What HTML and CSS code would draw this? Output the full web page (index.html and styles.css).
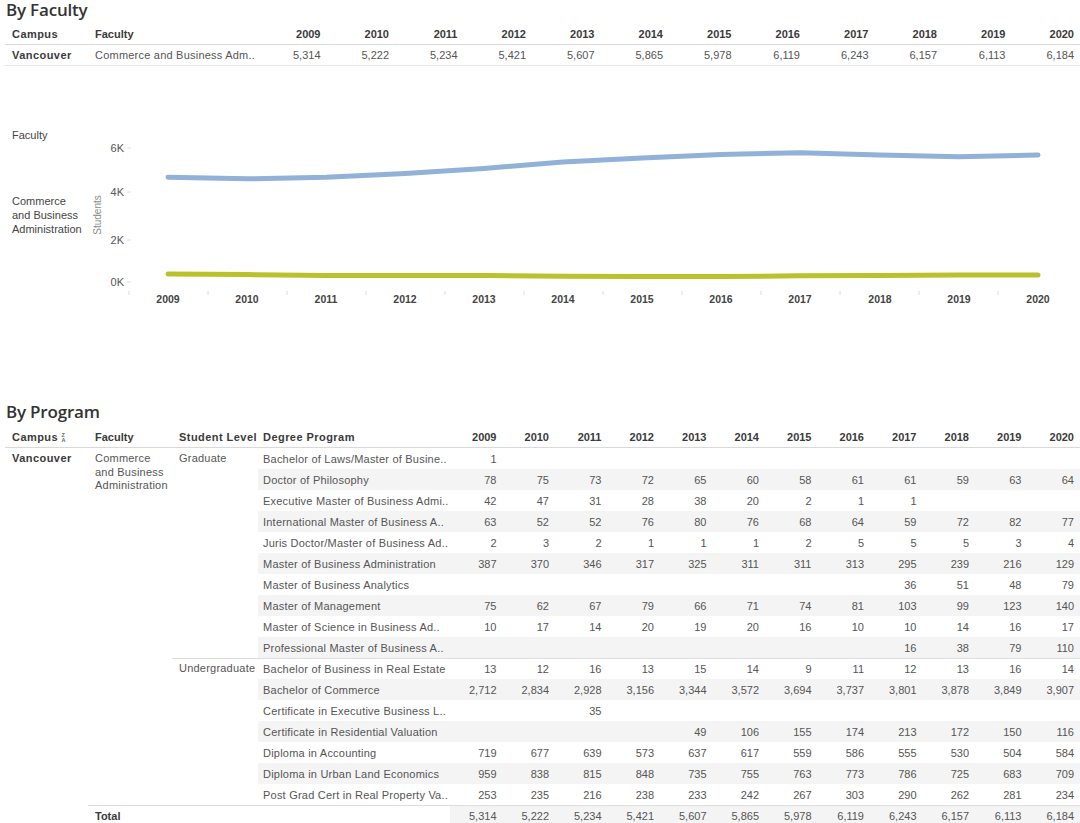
FILE: index.html
```html
<!DOCTYPE html>
<html>
<head>
<meta charset="utf-8">
<link rel="stylesheet" href="styles.css">
</head>
<body>
<div class="title">By Faculty</div>
<div class="ftable">
  <div class="frow fhead">
    <div class="fc-campus hd sp">Campus</div>
    <div class="fc-fac hd">Faculty</div>
    <div class="num hd">2009</div><div class="num hd">2010</div><div class="num hd">2011</div><div class="num hd">2012</div><div class="num hd">2013</div><div class="num hd">2014</div><div class="num hd">2015</div><div class="num hd">2016</div><div class="num hd">2017</div><div class="num hd">2018</div><div class="num hd">2019</div><div class="num hd">2020</div>
  </div>
  <div class="frow fdata">
    <div class="fc-campus hd sp">Vancouver</div>
    <div class="fc-fac txt">Commerce and Business Adm..</div>
    <div class="num">5,314</div><div class="num">5,222</div><div class="num">5,234</div><div class="num">5,421</div><div class="num">5,607</div><div class="num">5,865</div><div class="num">5,978</div><div class="num">6,119</div><div class="num">6,243</div><div class="num">6,157</div><div class="num">6,113</div><div class="num">6,184</div>
  </div>
</div>

<div class="chart">
  <div class="legend">
    <div class="leg-title">Faculty</div>
    <div class="leg-item">Commerce<br>and Business<br>Administration</div>
  </div>
  <svg class="plot" width="992" height="334" viewBox="88 66 992 334">
    <text class="axt" x="101" y="215" transform="rotate(-90 101 215)" text-anchor="middle">Students</text>
    <g class="ylab" text-anchor="end">
      <text x="124" y="152">6K</text>
      <text x="124" y="196">4K</text>
      <text x="124" y="244">2K</text>
      <text x="124" y="286">0K</text>
    </g>
    <g class="tk">
      <line x1="127" y1="148" x2="131" y2="148"/>
      <line x1="127" y1="192" x2="131" y2="192"/>
      <line x1="127" y1="240" x2="131" y2="240"/>
      <line x1="127" y1="282" x2="131" y2="282"/>
      <line x1="129" y1="291" x2="129" y2="295"/>
      <line x1="208" y1="291" x2="208" y2="295"/>
      <line x1="287" y1="291" x2="287" y2="295"/>
      <line x1="366" y1="291" x2="366" y2="295"/>
      <line x1="445" y1="291" x2="445" y2="295"/>
      <line x1="524" y1="291" x2="524" y2="295"/>
      <line x1="603" y1="291" x2="603" y2="295"/>
      <line x1="682" y1="291" x2="682" y2="295"/>
      <line x1="761" y1="291" x2="761" y2="295"/>
      <line x1="840" y1="291" x2="840" y2="295"/>
      <line x1="919" y1="291" x2="919" y2="295"/>
      <line x1="998" y1="291" x2="998" y2="295"/>
    </g>
    <g class="xlab" text-anchor="middle">
      <text x="168" y="303">2009</text>
      <text x="247" y="303">2010</text>
      <text x="326" y="303">2011</text>
      <text x="405" y="303">2012</text>
      <text x="484" y="303">2013</text>
      <text x="563" y="303">2014</text>
      <text x="642" y="303">2015</text>
      <text x="721" y="303">2016</text>
      <text x="800" y="303">2017</text>
      <text x="880" y="303">2018</text>
      <text x="959" y="303">2019</text>
      <text x="1038" y="303">2020</text>
    </g>
    <polyline class="ln blue" points="168,177.3 247,178.8 326,177.3 405,173.5 484,168.5 563,162 642,158 721,154.5 800,152.8 880,155 959,156.8 1038,155"/>
    <polyline class="ln green" points="168,274 247,274.6 326,275.4 405,275.6 484,275.6 563,276.2 642,276.6 721,276.6 800,275.8 880,275.6 959,275 1038,275"/>
  </svg>
</div>

<div class="title title2">By Program</div>
<div class="ptable">
  <div class="prow phead">
    <div class="pc-campus hd sp">Campus <span class="sort"><span>Z</span><span>A</span></span></div>
    <div class="pc-fac hd">Faculty</div>
    <div class="pc-level hd sp">Student Level</div>
    <div class="pc-deg hd sp">Degree Program</div>
    <div class="pnum hd">2009</div><div class="pnum hd">2010</div><div class="pnum hd">2011</div><div class="pnum hd">2012</div><div class="pnum hd">2013</div><div class="pnum hd">2014</div><div class="pnum hd">2015</div><div class="pnum hd">2016</div><div class="pnum hd">2017</div><div class="pnum hd">2018</div><div class="pnum hd">2019</div><div class="pnum hd">2020</div>
  </div>
  <div class="pbody">
    <div class="pc-campus hd sp cell-top">Vancouver</div>
    <div class="pc-fac cell-top fac-wrap txt">Commerce<br>and Business<br>Administration</div>
    <div class="levels">
      <div class="lgroup">
        <div class="pc-level cell-top txt">Graduate</div>
        <div class="rows">
          <div class="prow"><div class="pc-deg txt">Bachelor of Laws/Master of Busine..</div><div class="pnum">1</div><div class="pnum"></div><div class="pnum"></div><div class="pnum"></div><div class="pnum"></div><div class="pnum"></div><div class="pnum"></div><div class="pnum"></div><div class="pnum"></div><div class="pnum"></div><div class="pnum"></div><div class="pnum"></div></div>
          <div class="prow"><div class="pc-deg txt">Doctor of Philosophy</div><div class="pnum">78</div><div class="pnum">75</div><div class="pnum">73</div><div class="pnum">72</div><div class="pnum">65</div><div class="pnum">60</div><div class="pnum">58</div><div class="pnum">61</div><div class="pnum">61</div><div class="pnum">59</div><div class="pnum">63</div><div class="pnum">64</div></div>
          <div class="prow"><div class="pc-deg txt">Executive Master of Business Admi..</div><div class="pnum">42</div><div class="pnum">47</div><div class="pnum">31</div><div class="pnum">28</div><div class="pnum">38</div><div class="pnum">20</div><div class="pnum">2</div><div class="pnum">1</div><div class="pnum">1</div><div class="pnum"></div><div class="pnum"></div><div class="pnum"></div></div>
          <div class="prow"><div class="pc-deg txt">International Master of Business A..</div><div class="pnum">63</div><div class="pnum">52</div><div class="pnum">52</div><div class="pnum">76</div><div class="pnum">80</div><div class="pnum">76</div><div class="pnum">68</div><div class="pnum">64</div><div class="pnum">59</div><div class="pnum">72</div><div class="pnum">82</div><div class="pnum">77</div></div>
          <div class="prow"><div class="pc-deg txt">Juris Doctor/Master of Business Ad..</div><div class="pnum">2</div><div class="pnum">3</div><div class="pnum">2</div><div class="pnum">1</div><div class="pnum">1</div><div class="pnum">1</div><div class="pnum">2</div><div class="pnum">5</div><div class="pnum">5</div><div class="pnum">5</div><div class="pnum">3</div><div class="pnum">4</div></div>
          <div class="prow"><div class="pc-deg txt">Master of Business Administration</div><div class="pnum">387</div><div class="pnum">370</div><div class="pnum">346</div><div class="pnum">317</div><div class="pnum">325</div><div class="pnum">311</div><div class="pnum">311</div><div class="pnum">313</div><div class="pnum">295</div><div class="pnum">239</div><div class="pnum">216</div><div class="pnum">129</div></div>
          <div class="prow"><div class="pc-deg txt">Master of Business Analytics</div><div class="pnum"></div><div class="pnum"></div><div class="pnum"></div><div class="pnum"></div><div class="pnum"></div><div class="pnum"></div><div class="pnum"></div><div class="pnum"></div><div class="pnum">36</div><div class="pnum">51</div><div class="pnum">48</div><div class="pnum">79</div></div>
          <div class="prow"><div class="pc-deg txt">Master of Management</div><div class="pnum">75</div><div class="pnum">62</div><div class="pnum">67</div><div class="pnum">79</div><div class="pnum">66</div><div class="pnum">71</div><div class="pnum">74</div><div class="pnum">81</div><div class="pnum">103</div><div class="pnum">99</div><div class="pnum">123</div><div class="pnum">140</div></div>
          <div class="prow"><div class="pc-deg txt">Master of Science in Business Ad..</div><div class="pnum">10</div><div class="pnum">17</div><div class="pnum">14</div><div class="pnum">20</div><div class="pnum">19</div><div class="pnum">20</div><div class="pnum">16</div><div class="pnum">10</div><div class="pnum">10</div><div class="pnum">14</div><div class="pnum">16</div><div class="pnum">17</div></div>
          <div class="prow"><div class="pc-deg txt">Professional Master of Business A..</div><div class="pnum"></div><div class="pnum"></div><div class="pnum"></div><div class="pnum"></div><div class="pnum"></div><div class="pnum"></div><div class="pnum"></div><div class="pnum"></div><div class="pnum">16</div><div class="pnum">38</div><div class="pnum">79</div><div class="pnum">110</div></div>
        </div>
      </div>
      <div class="lgroup sep">
        <div class="pc-level cell-top txt">Undergraduate</div>
        <div class="rows">
          <div class="prow"><div class="pc-deg txt">Bachelor of Business in Real Estate</div><div class="pnum">13</div><div class="pnum">12</div><div class="pnum">16</div><div class="pnum">13</div><div class="pnum">15</div><div class="pnum">14</div><div class="pnum">9</div><div class="pnum">11</div><div class="pnum">12</div><div class="pnum">13</div><div class="pnum">16</div><div class="pnum">14</div></div>
          <div class="prow"><div class="pc-deg txt">Bachelor of Commerce</div><div class="pnum">2,712</div><div class="pnum">2,834</div><div class="pnum">2,928</div><div class="pnum">3,156</div><div class="pnum">3,344</div><div class="pnum">3,572</div><div class="pnum">3,694</div><div class="pnum">3,737</div><div class="pnum">3,801</div><div class="pnum">3,878</div><div class="pnum">3,849</div><div class="pnum">3,907</div></div>
          <div class="prow"><div class="pc-deg txt">Certificate in Executive Business L..</div><div class="pnum"></div><div class="pnum"></div><div class="pnum">35</div><div class="pnum"></div><div class="pnum"></div><div class="pnum"></div><div class="pnum"></div><div class="pnum"></div><div class="pnum"></div><div class="pnum"></div><div class="pnum"></div><div class="pnum"></div></div>
          <div class="prow"><div class="pc-deg txt">Certificate in Residential Valuation</div><div class="pnum"></div><div class="pnum"></div><div class="pnum"></div><div class="pnum"></div><div class="pnum">49</div><div class="pnum">106</div><div class="pnum">155</div><div class="pnum">174</div><div class="pnum">213</div><div class="pnum">172</div><div class="pnum">150</div><div class="pnum">116</div></div>
          <div class="prow"><div class="pc-deg txt">Diploma in Accounting</div><div class="pnum">719</div><div class="pnum">677</div><div class="pnum">639</div><div class="pnum">573</div><div class="pnum">637</div><div class="pnum">617</div><div class="pnum">559</div><div class="pnum">586</div><div class="pnum">555</div><div class="pnum">530</div><div class="pnum">504</div><div class="pnum">584</div></div>
          <div class="prow"><div class="pc-deg txt">Diploma in Urban Land Economics</div><div class="pnum">959</div><div class="pnum">838</div><div class="pnum">815</div><div class="pnum">848</div><div class="pnum">735</div><div class="pnum">755</div><div class="pnum">763</div><div class="pnum">773</div><div class="pnum">786</div><div class="pnum">725</div><div class="pnum">683</div><div class="pnum">709</div></div>
          <div class="prow"><div class="pc-deg txt">Post Grad Cert in Real Property Va..</div><div class="pnum">253</div><div class="pnum">235</div><div class="pnum">216</div><div class="pnum">238</div><div class="pnum">233</div><div class="pnum">242</div><div class="pnum">267</div><div class="pnum">303</div><div class="pnum">290</div><div class="pnum">262</div><div class="pnum">281</div><div class="pnum">234</div></div>
        </div>
      </div>
    </div>
  </div>
  <div class="ptotal">
    <div class="tot-label hd">Total</div>
    <div class="tot-nums">
      <div class="pnum">5,314</div><div class="pnum">5,222</div><div class="pnum">5,234</div><div class="pnum">5,421</div><div class="pnum">5,607</div><div class="pnum">5,865</div><div class="pnum">5,978</div><div class="pnum">6,119</div><div class="pnum">6,243</div><div class="pnum">6,157</div><div class="pnum">6,113</div><div class="pnum">6,184</div>
    </div>
  </div>
</div>
</body>
</html>
```

FILE: styles.css
```css
html, body {
  margin: 0;
  padding: 0;
  background: #ffffff;
}
body {
  font-family: "Liberation Sans", Arial, sans-serif;
  font-size: 11px;
  color: #555555;
  width: 1080px;
  overflow: hidden;
}
.title {
  font-family: "Open Sans", "DejaVu Sans", sans-serif;
  font-weight: 600;
  font-size: 17px;
  line-height: 20px;
  height: 24px;
  padding-left: 6px;
  color: #333333;
  letter-spacing: -0.2px;
  box-sizing: border-box;
}
.title2 {
  padding-top: 2px;
}
.hd {
  font-weight: bold;
  color: #3a3a3a;
}
.sp {
  letter-spacing: 0.45px;
}
.txt {
  letter-spacing: 0.22px;
}

/* Top table */
.ftable {
  margin-left: 5px;
}
.frow {
  display: flex;
  align-items: center;
  height: 20px;
  white-space: nowrap;
}
.fhead {
  border-bottom: 1px solid #d9d9d9;
}
.fdata {
  border-bottom: 1px solid #e6e6e6;
}
.fc-campus {
  flex: none;
  width: 87px;
  padding-left: 7px;
  box-sizing: border-box;
}
.fc-fac {
  width: 166px;
  flex: none;
  padding-left: 3px;
  box-sizing: border-box;
  overflow: hidden;
}
.num {
  flex: 1 1 0;
  text-align: right;
  padding-right: 6px;
}

/* Chart */
.chart {
  display: flex;
  height: 334px;
}
.legend {
  width: 88px;
  flex: none;
  padding-left: 12px;
  box-sizing: border-box;
  color: #444444;
}
.leg-title {
  margin-top: 62px;
  line-height: 14px;
}
.leg-item {
  margin-top: 52px;
  line-height: 14px;
}
.plot {
  display: block;
  flex: none;
}
.plot text {
  font-family: "Liberation Sans", Arial, sans-serif;
}
.axt {
  font-size: 10px;
  fill: #8a8a8a;
}
.ylab text {
  font-size: 11px;
  fill: #555555;
}
.xlab text {
  font-size: 10.5px;
  font-weight: bold;
  fill: #444444;
}
.tk line {
  stroke: #dcdcdc;
  stroke-width: 1;
}
.ln {
  fill: none;
  stroke-width: 5;
  stroke-linecap: round;
  stroke-linejoin: round;
}
.blue {
  stroke: #91b1d8;
}
.green {
  stroke: #b9c12b;
}

/* Program table */
.ptable {
  margin-left: 5px;
}
.prow {
  display: flex;
  align-items: center;
  height: 21px;
  white-space: nowrap;
}
.phead {
  height: 20px;
  padding-top: 3px;
  border-bottom: 1px solid #d9d9d9;
}
.pc-campus {
  width: 83px;
  flex: none;
  padding-left: 7px;
  box-sizing: border-box;
}
.pc-fac {
  width: 84px;
  flex: none;
  padding-left: 7px;
  box-sizing: border-box;
}
.pc-level {
  width: 86px;
  flex: none;
  padding-left: 7px;
  box-sizing: border-box;
}
.pc-deg {
  width: 192px;
  flex: none;
  padding-left: 5px;
  box-sizing: border-box;
  overflow: hidden;
}
.pnum {
  flex: 1 1 0;
  text-align: right;
  padding-right: 6px;
}
.sort {
  display: inline-flex;
  flex-direction: column;
  font-size: 5.5px;
  line-height: 5px;
  vertical-align: middle;
  letter-spacing: 0;
  color: #666666;
  margin-left: 0;
}
.pbody {
  display: flex;
}
.cell-top {
  padding-top: 4px;
  line-height: 13px;
}
.fac-wrap {
  line-height: 13.5px;
  color: #555555;
}
.levels {
  flex: 1;
  display: flex;
  flex-direction: column;
}
.lgroup {
  display: flex;
}
.lgroup.sep {
  border-top: 1px solid #dedede;
}
.lgroup.sep .cell-top {
  padding-top: 3px;
}
.lgroup.sep .prow:first-child {
  height: 20px;
}
.lgroup .pc-level {
  color: #555555;
}
.rows {
  flex: 1;
  display: flex;
  flex-direction: column;
}
.rows .prow:nth-child(even) {
  background: #f4f4f4;
}
.ptotal {
  display: flex;
  align-items: center;
  height: 20px;
  margin-left: 83px;
  border-top: 1px solid #dedede;
}
.tot-label {
  width: 362px;
  flex: none;
  padding-left: 7px;
  box-sizing: border-box;
}
.tot-nums {
  flex: 1;
  display: flex;
  align-items: center;
  height: 20px;
  background: #f4f4f4;
}
```
